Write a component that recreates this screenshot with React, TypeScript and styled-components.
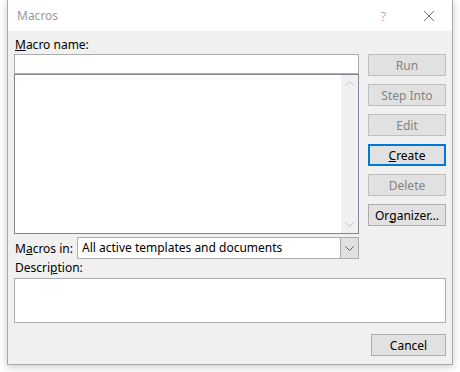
import React from 'react';
import styled, { createGlobalStyle } from 'styled-components';

const GlobalStyle = createGlobalStyle`
  html, body {
    margin: 0;
    padding: 0;
    background: #ffffff;
  }

  body {
    font-family: 'Segoe UI', 'Noto Sans', 'Open Sans', sans-serif;
    font-size: 12px;
    color: #000000;
  }
`;

interface ButtonProps {
  $disabled?: boolean;
  $default?: boolean;
}

export default function App() {
  return (
    <>
      <GlobalStyle />
      <Page>
        <Window>
          <TitleBar>
            <Title>Macros</Title>
            <TitleButtons>
              <HelpGlyph>?</HelpGlyph>
              <CloseIcon width="12" height="12" viewBox="0 0 12 12">
                <path d="M1 1 L11 11 M11 1 L1 11" stroke="#707070" strokeWidth="1" />
              </CloseIcon>
            </TitleButtons>
          </TitleBar>

          <Body>
            <Label>
              <u>M</u>acro name:
            </Label>
            <Main>
              <LeftColumn>
                <NameInput />
                <ListBox>
                  <ListArea />
                  <ScrollTrack>
                    <Chevron viewBox="0 0 9 5">
                      <path d="M0.5 4.5 L4.5 0.5 L8.5 4.5" />
                    </Chevron>
                    <Chevron viewBox="0 0 9 5">
                      <path d="M0.5 0.5 L4.5 4.5 L8.5 0.5" />
                    </Chevron>
                  </ScrollTrack>
                </ListBox>
                <ComboRow>
                  <InlineLabel>
                    M<u>a</u>cros in:
                  </InlineLabel>
                  <Combo>
                    <ComboText>All active templates and documents</ComboText>
                    <ComboButton>
                      <ComboChevron viewBox="0 0 9 5">
                        <path d="M0.5 0.5 L4.5 4.5 L8.5 0.5" />
                      </ComboChevron>
                    </ComboButton>
                  </Combo>
                </ComboRow>
              </LeftColumn>

              <ButtonColumn>
                {ACTIONS.map(item => (
                  <Button key={item.id} $disabled={item.disabled} $default={item.isDefault}>
                    {item.label}
                  </Button>
                ))}
              </ButtonColumn>
            </Main>

            <DescriptionLabel>
              Descri<u>p</u>tion:
            </DescriptionLabel>
            <DescriptionBox />

            <Footer>
              <CancelButton>Cancel</CancelButton>
            </Footer>
          </Body>
        </Window>
      </Page>
    </>
  );
}

const ACTIONS = [
  { id: 1, label: 'Run', disabled: true },
  { id: 2, label: 'Step Into', disabled: true },
  { id: 3, label: 'Edit', disabled: true },
  {
    id: 4,
    label: (
      <>
        <u>C</u>reate
      </>
    ),
    isDefault: true,
  },
  { id: 5, label: 'Delete', disabled: true },
  {
    id: 6,
    label: (
      <>
        Or<u>g</u>anizer...
      </>
    ),
  },
];

const Page = styled.div`
  width: 460px;
  height: 372px;
  overflow: hidden;
  padding-left: 7px;
  box-sizing: border-box;
`;

const Window = styled.div`
  display: flex;
  flex-direction: column;

  width: 446px;
  height: 365px;
  box-sizing: border-box;

  border: 1px solid #a9a9a9;
  border-top: none;
  background: #f0f0f0;
  box-shadow: 0 2px 8px rgba(0, 0, 0, 0.22);
`;

const TitleBar = styled.div`
  display: flex;
  align-items: center;
  justify-content: space-between;

  height: 31px;
  padding: 0 17px 0 9px;
  background: #ffffff;
`;

const Title = styled.span`
  color: #999999;
  font-size: 12px;
`;

const TitleButtons = styled.div`
  display: flex;
  align-items: center;
  gap: 37px;
`;

const HelpGlyph = styled.span`
  color: #8a8a8a;
  font-size: 13px;
  font-weight: 300;
`;

const CloseIcon = styled.svg`
  display: block;
`;

const Body = styled.div`
  display: flex;
  flex-direction: column;
  flex: 1;
  padding: 6px 6px 0 6px;
`;

const Label = styled.div`
  height: 16px;
  line-height: 16px;
  margin: 0 0 1px 1px;
`;

const Main = styled.div`
  display: grid;
  grid-template-columns: 345px 78px;
  column-gap: 9px;
`;

const LeftColumn = styled.div`
  display: flex;
  flex-direction: column;
`;

const NameInput = styled.div`
  height: 20px;
  box-sizing: border-box;
  border: 1px solid #abadb3;
  background: #ffffff;
`;

const ListBox = styled.div`
  display: flex;
  height: 160px;
  box-sizing: border-box;
  border: 1px solid #828790;
  background: #ffffff;
`;

const ListArea = styled.div`
  flex: 1;
`;

const ScrollTrack = styled.div`
  display: flex;
  flex-direction: column;
  justify-content: space-between;
  align-items: center;

  width: 17px;
  padding: 6px 0 6px;
  box-sizing: border-box;
  background: #f0f0f0;
`;

const Chevron = styled.svg`
  width: 9px;
  height: 5px;
  fill: none;
  stroke: #c2c2c2;
  stroke-width: 1;
`;

const ComboRow = styled.div`
  display: flex;
  align-items: center;
  margin-top: 3px;
`;

const InlineLabel = styled.span`
  width: 62px;
  padding-left: 1px;
`;

const Combo = styled.div`
  display: flex;
  flex: 1;
  height: 22px;
  box-sizing: border-box;
  border: 1px solid #acacac;
  background: #ffffff;
`;

const ComboText = styled.span`
  flex: 1;
  padding-left: 4px;
  line-height: 20px;
`;

const ComboButton = styled.div`
  display: flex;
  align-items: center;
  justify-content: center;

  width: 17px;
  background: #e0e0e0;
  border-left: 1px solid #acacac;
`;

const ComboChevron = styled.svg`
  width: 9px;
  height: 5px;
  fill: none;
  stroke: #606060;
  stroke-width: 1;
`;

const ButtonColumn = styled.div`
  display: flex;
  flex-direction: column;
  gap: 8px;
`;

const Button = styled.div<ButtonProps>`
  display: flex;
  align-items: center;
  justify-content: center;

  height: 22px;
  box-sizing: border-box;

  border: ${({ $default }) => ($default ? '2px solid #0078d7' : '1px solid #adadad')};
  border-color: ${({ $disabled, $default }) =>
    $default ? '#0078d7' : $disabled ? '#bfbfbf' : '#adadad'};
  background: #e1e1e1;
  color: ${({ $disabled }) => ($disabled ? '#838383' : '#000000')};
`;

const DescriptionLabel = styled.div`
  height: 16px;
  line-height: 16px;
  margin: 1px 0 2px 1px;
`;

const DescriptionBox = styled.div`
  height: 45px;
  box-sizing: border-box;
  border: 1px solid #abadb3;
  background: #ffffff;
`;

const Footer = styled.div`
  display: flex;
  justify-content: flex-end;
  padding-top: 11px;
`;

const CancelButton = styled(Button)`
  width: 75px;
`;
